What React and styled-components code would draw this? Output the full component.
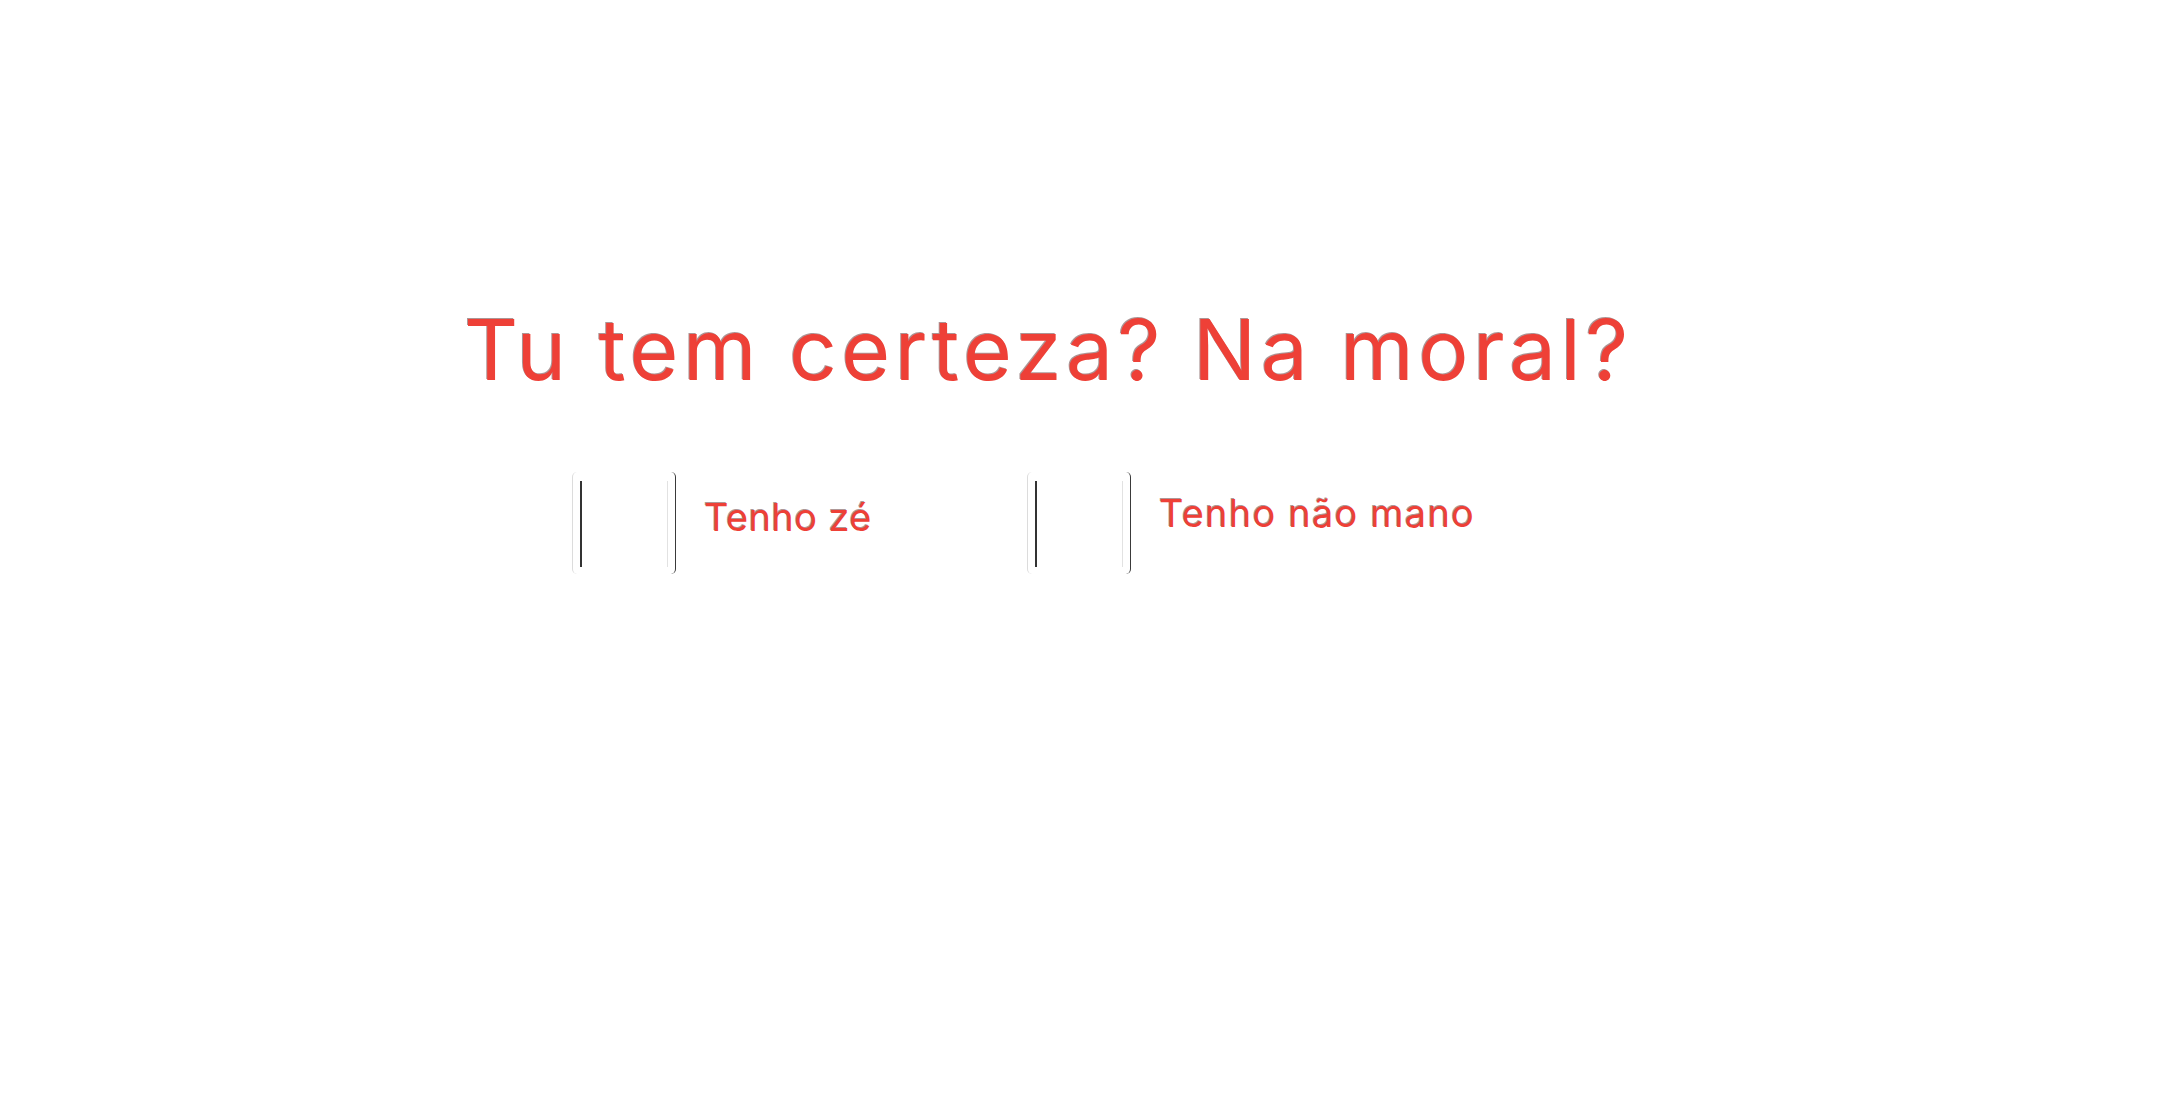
import styled, { createGlobalStyle } from "styled-components";

const GlobalStyle = createGlobalStyle`
  html, body {
    margin: 0;
    padding: 0;
    background: #ffffff;
  }
  body {
    font-family: Inter, Roboto, "Liberation Sans", sans-serif;
  }
`;

const Page = styled.main`
  min-height: 100vh;
  padding: 300px 0 0 464px;
  box-sizing: border-box;
`;

const Title = styled.h1`
  margin: 0;
  font-size: 84px;
  font-weight: 400;
  line-height: 1.2;
  letter-spacing: 4.4px;
  color: #ee4037;
  text-shadow: -1px -1px 0 rgba(70, 20, 20, 0.45);
`;

const Choices = styled.div`
  display: grid;
  grid-template-columns: 455px auto;
  margin: 71px 0 0 108px;
`;

const Choice = styled.label`
  display: flex;
  align-items: center;
  gap: 28px;
  cursor: pointer;
`;

const Frame = styled.span`
  width: 104px;
  height: 102px;
  box-sizing: border-box;
  display: flex;
  padding: 9px 7px 7px 7px;
  border-radius: 5px;
  border-left: 1px solid #dcdcdc;
  border-right: 1.5px solid #3a3a3a;
`;

const Inner = styled.span`
  flex: 1;
  border-left: 2px solid #333333;
  border-right: 1px solid #e2e2e2;
`;

const Label = styled.span`
  font-size: 38px;
  letter-spacing: ${(p) => p.$spacing}px;
  color: #ee4037;
  text-shadow: -1px -1px 0 rgba(70, 20, 20, 0.45);
  transform: translateY(${(p) => p.$shift || 0}px);
`;

export default function App() {
  return (
    <>
      <GlobalStyle />
      <Page>
        <Title>Tu tem certeza? Na moral?</Title>
        <Choices>
          <Choice>
            <Frame>
              <Inner />
            </Frame>
            <Label $spacing={0.4} $shift={-6}>
              Tenho zé
            </Label>
          </Choice>
          <Choice>
            <Frame>
              <Inner />
            </Frame>
            <Label $spacing={1.2} $shift={-10}>
              Tenho não mano
            </Label>
          </Choice>
        </Choices>
      </Page>
    </>
  );
}
